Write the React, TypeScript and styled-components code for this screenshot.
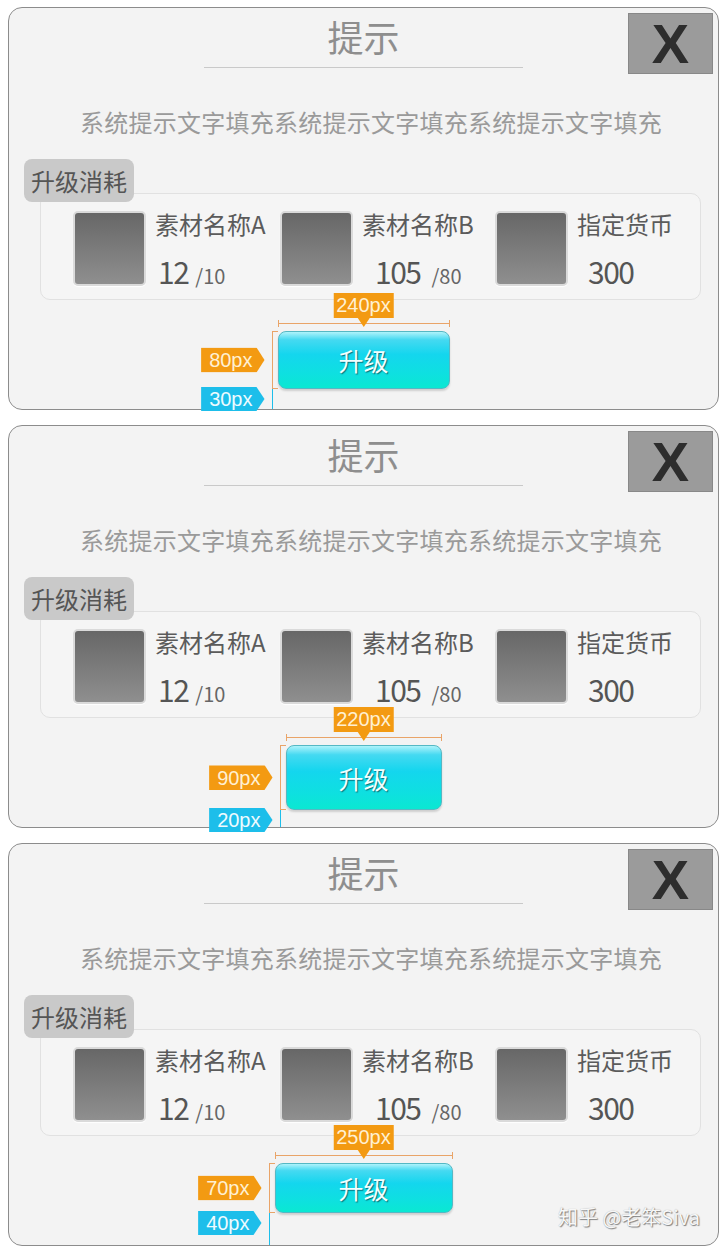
import React from "react";
import styled, { createGlobalStyle } from "styled-components";

const GlobalStyle = createGlobalStyle`
  html, body {
    margin: 0;
    padding: 0;
    background: #ffffff;
  }
  body {
    font-family: "Noto Sans CJK SC", "Noto Sans", sans-serif;
  }
`;

const Page = styled.div`
  display: flex;
  flex-direction: column;
  gap: 15px;
  width: 711px;
  padding: 7px 0 0 8px;
`;

const Panel = styled.section`
  position: relative;
  height: 403px;
  box-sizing: border-box;
  border: 1px solid #8c8c8c;
  border-radius: 14px;
  background: #f3f3f3;
  display: flex;
  flex-direction: column;
`;

const Header = styled.div`
  display: grid;
  grid-template-columns: 1fr auto 1fr;
  padding-top: 5px;
`;

const TitleBlock = styled.div`
  grid-column: 2;
  padding-top: 1px;
  text-align: center;
`;

const Title = styled.h2`
  margin: 0;
  font-size: 36px;
  line-height: 44px;
  font-weight: 400;
  color: #8e8e8e;
`;

const Divider = styled.div`
  width: 319px;
  height: 1px;
  margin: 9px auto 0;
  background: #c9c9c9;
`;

const CloseButton = styled.div`
  grid-column: 3;
  justify-self: end;
  align-self: start;
  margin-right: 5px;
  width: 85px;
  height: 61px;
  box-sizing: border-box;
  border: 1px solid #888888;
  background: #9b9b9b;
  display: flex;
  align-items: center;
  justify-content: center;
  font-family: "Liberation Sans", Arial, sans-serif;
  font-weight: 700;
  font-size: 56px;
  color: #2d2d2d;
`;

const Hint = styled.p`
  margin: 30px 0 0;
  padding-left: 15px;
  font-size: 24px;
  letter-spacing: 0.25px;
  line-height: 36px;
  text-align: center;
  color: #9a9a9a;
`;

const CostSection = styled.div`
  display: flex;
  flex-direction: column;
  margin-top: 19px;
  padding: 0 17px 0 15px;
`;

const CostTag = styled.div`
  position: relative;
  z-index: 1;
  align-self: flex-start;
  height: 43px;
  padding: 0 7px;
  line-height: 43px;
  font-size: 24px;
  color: #555555;
  background: #c9c9c9;
  border-radius: 8px;
`;

const MaterialBox = styled.div`
  margin: -9px 0 0 16px;
  height: 107px;
  box-sizing: border-box;
  border: 1px solid #e1e1e1;
  border-radius: 10px;
  background: #f5f5f5;
  display: grid;
  grid-template-columns: 207px 215px auto;
  padding: 17px 0 0 32px;
`;

const Item = styled.div`
  display: flex;
  gap: 9px;
`;

const ItemIcon = styled.div`
  width: 73px;
  height: 75px;
  box-sizing: border-box;
  border: 2px solid #dadada;
  border-radius: 5px;
  background: linear-gradient(#676767, #8f8f8f);
  box-shadow: 0 1px 1px #ffffff;
`;

const ItemText = styled.div`
  display: flex;
  flex-direction: column;
`;

const ItemName = styled.div`
  font-size: 24px;
  line-height: 26px;
  color: #5b5b5b;
`;

const Amount = styled.div<{ $indent: number }>`
  margin-top: 16px;
  padding-left: ${(p) => p.$indent}px;
  line-height: 36px;
  color: #555555;
  white-space: nowrap;
`;

const Count = styled.span`
  font-size: 30px;
  letter-spacing: -1.5px;
`;

const Need = styled.span<{ $space: number }>`
  margin-left: ${(p) => p.$space}px;
  font-size: 20px;
  color: #666666;
`;

const ButtonSection = styled.div<{ $gap: number }>`
  flex: 1;
  display: flex;
  justify-content: center;
  align-items: flex-end;
  padding-bottom: ${(p) => p.$gap}px;
`;

const ButtonWrap = styled.div<{ $w: number; $h: number }>`
  position: relative;
  width: ${(p) => p.$w}px;
  height: ${(p) => p.$h}px;
`;

const UpgradeButton = styled.div`
  width: 100%;
  height: 100%;
  box-sizing: border-box;
  border: 1px solid #55b8c4;
  border-radius: 8px;
  background: linear-gradient(
    #aef3fb 0%,
    #45d9f1 14%,
    #14d6ee 40%,
    #0ee0e0 75%,
    #0ae8d2 100%
  );
  box-shadow: 0 2px 2px rgba(0, 0, 0, 0.15);
  display: flex;
  align-items: center;
  justify-content: center;
  font-size: 25px;
  color: #f2ffff;
  text-shadow: 1px 1px 1px rgba(0, 70, 80, 0.7);
`;

const orange = "#f39a12";
const cyan = "#1dbeea";

const WidthLine = styled.div`
  position: absolute;
  left: 0;
  right: 0;
  top: -8px;
  height: 1px;
  background: #e9a468;
  &::before,
  &::after {
    content: "";
    position: absolute;
    top: -3px;
    width: 1px;
    height: 7px;
    background: #e9a468;
  }
  &::before {
    left: 0;
  }
  &::after {
    right: 0;
  }
`;

const WidthTag = styled.div`
  position: absolute;
  left: 50%;
  bottom: calc(100% + 13px);
  transform: translateX(-50%);
  height: 25px;
  padding: 0 3px;
  line-height: 25px;
  background: ${orange};
  font-family: "Liberation Sans", Arial, sans-serif;
  font-size: 20px;
  color: #fff0d2;
  &::after {
    content: "";
    position: absolute;
    left: 50%;
    top: 100%;
    margin-left: -6px;
    border-left: 6px solid transparent;
    border-right: 6px solid transparent;
    border-top: 9px solid ${orange};
  }
`;

const HeightLine = styled.div`
  position: absolute;
  left: -6px;
  top: 0;
  bottom: 0;
  width: 1px;
  background: #e9a468;
  &::before,
  &::after {
    content: "";
    position: absolute;
    left: 0;
    width: 6px;
    height: 1px;
    background: #e9a468;
  }
  &::before {
    top: 0;
  }
  &::after {
    bottom: 0;
  }
`;

const SideTag = styled.div<{ $color: string; $text: string }>`
  position: absolute;
  right: calc(100% + 13px);
  height: 25px;
  padding: 0 12px 0 8px;
  line-height: 25px;
  background: ${(p) => p.$color};
  clip-path: polygon(0 0, calc(100% - 8px) 0, 100% 50%, calc(100% - 8px) 100%, 0 100%);
  font-family: "Liberation Sans", Arial, sans-serif;
  font-size: 20px;
  color: ${(p) => p.$text};
`;

const HeightTag = styled(SideTag)`
  top: 50%;
  transform: translateY(-50%);
`;

const GapTag = styled(SideTag)`
  top: calc(100% - 2px);
  height: 24px;
  line-height: 24px;
`;

const GapLine = styled.div<{ $h: number }>`
  position: absolute;
  left: -6px;
  top: 100%;
  width: 1px;
  height: ${(p) => p.$h}px;
  background: ${cyan};
`;

const Watermark = styled.div`
  position: absolute;
  right: 18px;
  bottom: 14px;
  font-size: 20px;
  color: #f7f7f7;
  text-shadow: 1px 1px 1px rgba(0, 0, 0, 0.45), 0 0 1px rgba(0, 0, 0, 0.3);
`;

const materials = [
  { name: "素材名称A", count: "12", need: "/10", indent: 3, space: 7 },
  { name: "素材名称B", count: "105", need: "/80", indent: 13, space: 11 },
  { name: "指定货币", count: "300", need: "", indent: 11, space: 0 },
];

const variants = [
  { w: 172, h: 58, gap: 20, label: "240px", height: "80px", space: "30px" },
  { w: 156, h: 65, gap: 17, label: "220px", height: "90px", space: "20px" },
  { w: 178, h: 50, gap: 32, label: "250px", height: "70px", space: "40px" },
];

export default function App() {
  return (
    <>
      <GlobalStyle />
      <Page>
        {variants.map((v, i) => (
          <Panel key={v.label}>
            <Header>
              <TitleBlock>
                <Title>提示</Title>
                <Divider />
              </TitleBlock>
              <CloseButton>X</CloseButton>
            </Header>

            <Hint>系统提示文字填充系统提示文字填充系统提示文字填充</Hint>

            <CostSection>
              <CostTag>升级消耗</CostTag>
              <MaterialBox>
                {materials.map((m) => (
                  <Item key={m.name}>
                    <ItemIcon />
                    <ItemText>
                      <ItemName>{m.name}</ItemName>
                      <Amount $indent={m.indent}>
                        <Count>{m.count}</Count>
                        {m.need && <Need $space={m.space}>{m.need}</Need>}
                      </Amount>
                    </ItemText>
                  </Item>
                ))}
              </MaterialBox>
            </CostSection>

            <ButtonSection $gap={v.gap}>
              <ButtonWrap $w={v.w} $h={v.h}>
                <UpgradeButton>升级</UpgradeButton>
                <WidthLine />
                <WidthTag>{v.label}</WidthTag>
                <HeightLine />
                <HeightTag $color={orange} $text="#fff0d2">
                  {v.height}
                </HeightTag>
                <GapLine $h={v.gap} />
                <GapTag $color={cyan} $text="#eefbff">
                  {v.space}
                </GapTag>
              </ButtonWrap>
            </ButtonSection>

            {i === variants.length - 1 && <Watermark>知乎 @老笨Siva</Watermark>}
          </Panel>
        ))}
      </Page>
    </>
  );
}
